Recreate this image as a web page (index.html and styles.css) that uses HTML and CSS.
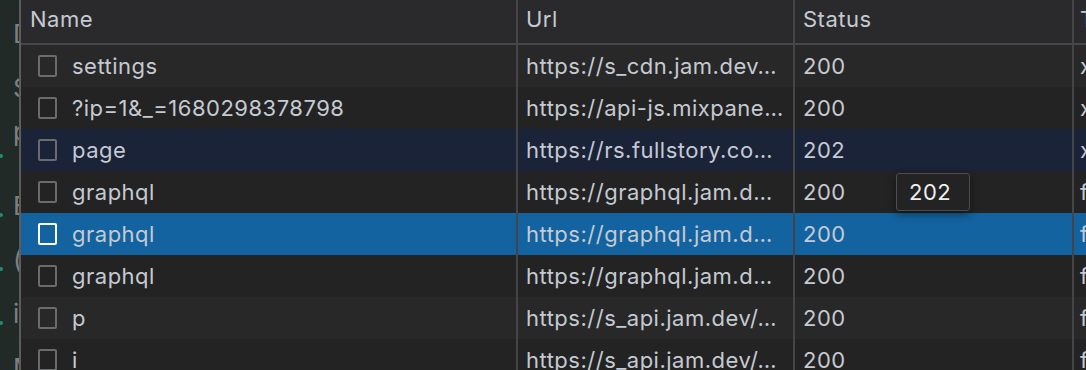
FILE: index.html
```html
<!DOCTYPE html>
<html lang="en">
<head>
  <meta charset="UTF-8" />
  <title>Network</title>
  <link rel="stylesheet" href="styles.css">
</head>
<body>
  <div class="sidebar">
    <div class="side-line first">Debugger</div>
    <div class="side-line">Sources</div>
    <div class="side-line tight"><span class="dot low"></span>performance</div>
    <div class="side-line wide"><span class="dot"></span>Elements</div>
    <div class="side-line"><span class="dot"></span>(console)</div>
    <div class="side-line"><span class="dot"></span>index</div>
    <div class="side-line">Memory</div>
  </div>
  <div class="panel">
    <div class="row header">
      <div class="cell name">Name</div>
      <div class="cell">Url</div>
      <div class="cell">Status</div>
      <div class="cell last">Type</div>
    </div>
    <div class="row light">
      <div class="cell name"><span class="check"></span>settings</div>
      <div class="cell">https://s_cdn.jam.dev…</div>
      <div class="cell">200</div>
      <div class="cell last">xhr</div>
    </div>
    <div class="row dark">
      <div class="cell name"><span class="check"></span>?ip=1&amp;_=1680298378798</div>
      <div class="cell">https://api-js.mixpane…</div>
      <div class="cell">200</div>
      <div class="cell last">xhr</div>
    </div>
    <div class="row hover">
      <div class="cell name"><span class="check"></span>page</div>
      <div class="cell">https://rs.fullstory.co…</div>
      <div class="cell">202</div>
      <div class="cell last">xhr</div>
    </div>
    <div class="row dark">
      <div class="cell name"><span class="check"></span>graphql</div>
      <div class="cell">https://graphql.jam.d…</div>
      <div class="cell status-tip">200<div class="tooltip">202</div></div>
      <div class="cell last">fetch</div>
    </div>
    <div class="row selected">
      <div class="cell name"><span class="check"></span>graphql</div>
      <div class="cell">https://graphql.jam.d…</div>
      <div class="cell">200</div>
      <div class="cell last">fetch</div>
    </div>
    <div class="row dark">
      <div class="cell name"><span class="check"></span>graphql</div>
      <div class="cell">https://graphql.jam.d…</div>
      <div class="cell">200</div>
      <div class="cell last">fetch</div>
    </div>
    <div class="row light">
      <div class="cell name"><span class="check"></span>p</div>
      <div class="cell">https://s_api.jam.dev/…</div>
      <div class="cell">200</div>
      <div class="cell last">fetch</div>
    </div>
    <div class="row dark">
      <div class="cell name"><span class="check"></span>i</div>
      <div class="cell">https://s_api.jam.dev/…</div>
      <div class="cell">200</div>
      <div class="cell last">fetch</div>
    </div>
  </div>
</body>
</html>
```
FILE: styles.css
```css
body {
  margin: 0;
  height: 370px;
  overflow: hidden;
  display: flex;
  background: #232323;
  font-family: 'Inter', 'Liberation Sans', sans-serif;
  font-size: 22px;
  letter-spacing: 0.5px;
  color: #c5cad2;
}
.sidebar {
  width: 19px;
  flex-shrink: 0;
  background: #222a27;
  border-right: 2px solid #5c5c5e;
  overflow: hidden;
  display: flex;
  flex-direction: column;
  gap: 28px;
  padding-top: 20px;
  box-sizing: content-box;
}
.side-line {
  display: flex;
  align-items: center;
  height: 26px;
  white-space: nowrap;
  color: #7d7f80;
  font-size: 26px;
  letter-spacing: 0;
  padding-left: 13px;
  position: relative;
}
.side-line.tight {
  margin-top: -10px;
}
.side-line.wide {
  margin-top: 20px;
}
.dot {
  position: absolute;
  left: -1px;
  top: 21px;
  width: 4px;
  height: 4px;
  border-radius: 50%;
  background: #1f8c6e;
}
.dot.low {
  top: 36px;
}
.panel {
  flex: 1;
  overflow: hidden;
  position: relative;
}
.row {
  display: grid;
  grid-template-columns: 497px 277px 279px 1fr;
  height: 42px;
}
.row.header {
  height: 43px;
  background: #2a2a2d;
  border-bottom: 2px solid #47474b;
}
.row.header .cell {
  padding-bottom: 6px;
}
.row.light { background: #282828; }
.row.dark { background: #232323; }
.row.hover { background: #1a2337; }
.row.selected { background: #12639f; }
.cell {
  display: flex;
  align-items: center;
  padding-left: 8px;
  border-right: 2px solid #454548;
  white-space: nowrap;
  overflow: hidden;
}
.cell.last {
  border-right: none;
  padding-left: 6px;
}
.row.header .cell.name {
  padding-left: 9px;
}
.cell.name {
  padding-left: 17px;
}
.check {
  width: 15px;
  height: 18px;
  border: 2px solid #6a6b6d;
  border-radius: 2px;
  margin-right: 15px;
  flex-shrink: 0;
}
.row.selected .check {
  border-color: #ffffff;
}
.status-tip {
  overflow: visible;
  position: relative;
}
.tooltip {
  position: absolute;
  left: 101px;
  top: 2px;
  width: 74px;
  height: 38px;
  box-sizing: border-box;
  padding-left: 12px;
  display: flex;
  align-items: center;
  background: #232323;
  border: 1px solid #4d4d50;
  border-radius: 3px;
  color: #eeeeee;
  box-shadow: 0 3px 8px rgba(0, 0, 0, 0.45);
  z-index: 2;
}
```
